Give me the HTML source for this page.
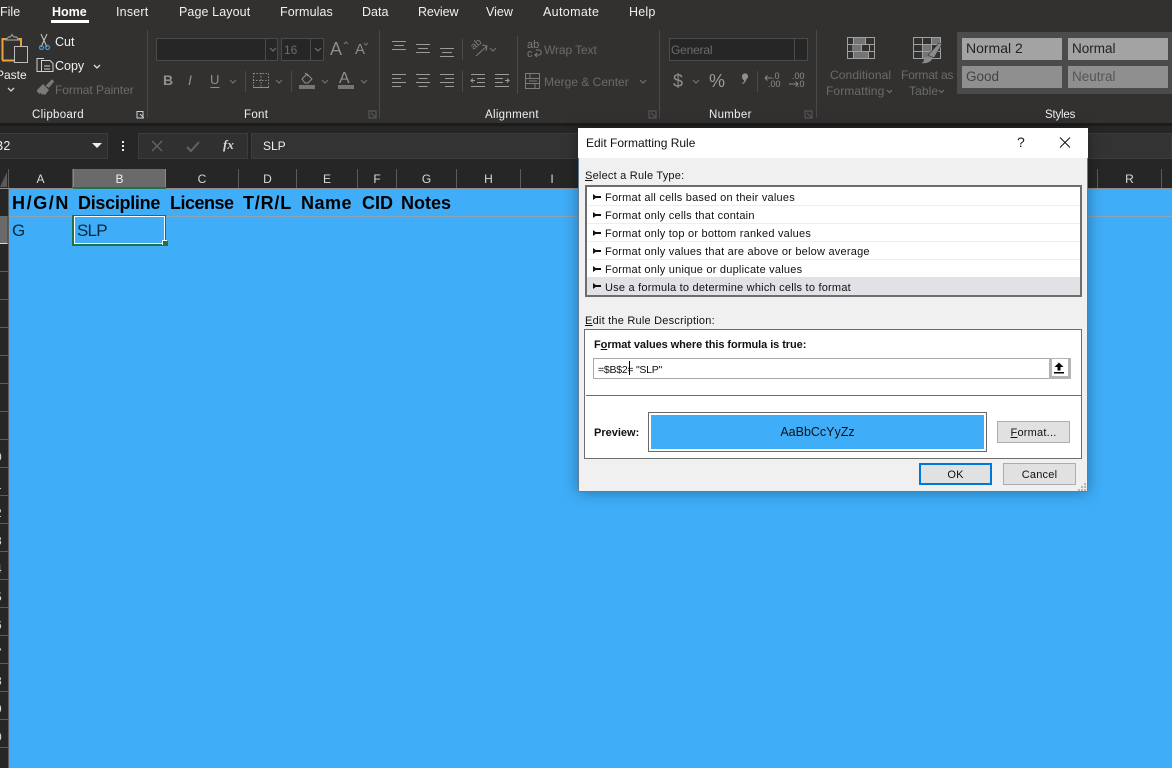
<!DOCTYPE html>
<html lang="en"><head><meta charset="utf-8"><title>Edit Formatting Rule</title>
<style>
*{box-sizing:border-box}
html{margin:0;padding:0;width:1172px;height:768px;overflow:hidden;background:#3fadf8}
body{margin:0;padding:0;width:1172px;height:768px;overflow:hidden;position:relative;background:#3fadf8;font-family:"Liberation Sans",sans-serif}
.a{position:absolute;white-space:nowrap}
.b{position:absolute}
.t{position:absolute;white-space:nowrap;font-size:12.5px;line-height:16px;color:#f0f0f0}
.g{color:#6b6b6b}
.lbl{position:absolute;top:107px;font-size:11.5px;line-height:16px;color:#f0f0f0;white-space:nowrap;letter-spacing:.3px}
.sep{position:absolute;top:30px;height:88px;width:1px;background:#4a4a4a}
.sep2{position:absolute;width:1px;background:#4a4a4a}
.box{position:absolute;background:#262626;border:1px solid #4a4a4a;height:23px}
.col{position:absolute;top:169px;height:19px;text-align:center;font-size:12px;line-height:20px;color:#d8d8d8;border-right:1px solid #5c5c5c}
.rh{position:absolute;left:0;width:8px;height:28px;border-bottom:1px solid #5c5c5c;overflow:hidden}
.rh span{position:absolute;left:-5px;top:10px;font-size:12px;line-height:14px;color:#d8d8d8}
.hd{position:absolute;top:192px;font-weight:bold;font-size:18px;line-height:22px;color:#000;white-space:nowrap}
svg{position:absolute;overflow:visible}
.it{position:absolute;left:605px;white-space:nowrap;font-size:11px;line-height:18px;color:#111;letter-spacing:.22px;width:470px}
.li{position:absolute;left:587px;width:493px;height:18px;border-bottom:1px solid #eee}
.li i{position:absolute;left:6px;top:8px;width:8px;height:2px;background:#111}
.li i:after{content:"";position:absolute;left:0;top:-2px;border-left:4px solid #111;border-top:3px solid transparent;border-bottom:3px solid transparent}
.dt{position:absolute;white-space:nowrap;font-size:11px;line-height:14px;color:#111;letter-spacing:.22px}
.btn{position:absolute;background:#e1e1e1;border:1px solid #adadad;height:22px;text-align:center;font-size:11px;line-height:22px;color:#111;letter-spacing:.22px}
.st{position:absolute;width:100px;height:22px;font-size:13.5px;line-height:21px;padding-left:4px;white-space:nowrap}
</style></head><body>

<!-- ribbon -->
<div class="b" style="left:0;top:0;width:1172px;height:123px;background:#323130"></div>
<div class="b" style="left:0;top:123px;width:1172px;height:46px;background:#262626"></div>
<div class="b" style="left:0;top:123px;width:1172px;height:3px;background:#1c1c1c"></div>

<div class="t" style="left:0;top:4px">File</div>
<div class="t" style="left:52px;top:4px;font-weight:bold;color:#fff">Home</div>
<div class="b" style="left:51px;top:20px;width:38px;height:3px;background:#fff"></div>
<div class="t" style="left:116px;top:4px;letter-spacing:.2px">Insert</div>
<div class="t" style="left:179px;top:4px;letter-spacing:.1px">Page Layout</div>
<div class="t" style="left:280px;top:4px;letter-spacing:.1px">Formulas</div>
<div class="t" style="left:362px;top:4px">Data</div>
<div class="t" style="left:418px;top:4px;letter-spacing:-.1px">Review</div>
<div class="t" style="left:486px;top:4px">View</div>
<div class="t" style="left:543px;top:4px;letter-spacing:.35px">Automate</div>
<div class="t" style="left:629px;top:4px;letter-spacing:.2px">Help</div>

<div class="sep" style="left:147px"></div><div class="sep" style="left:379px"></div>
<div class="sep" style="left:659px"></div><div class="sep" style="left:816px"></div>
<div class="sep2" style="left:245px;top:71px;height:21px"></div>
<div class="sep2" style="left:291px;top:71px;height:21px"></div>
<div class="sep2" style="left:462px;top:39px;height:21px"></div>
<div class="sep2" style="left:462px;top:71px;height:21px"></div>
<div class="sep2" style="left:517px;top:36px;height:58px"></div>
<div class="sep2" style="left:757px;top:71px;height:21px"></div>

<!-- clipboard -->
<svg style="left:0;top:0" width="146" height="120" fill="none">
<path d="M2.500 60V39H7M17 39H21V46M2 60.500H14" stroke="#e8a33d" stroke-width="2"/>
<path d="M6 40L8.500 37H10.500L12 34.500L14 37H16.500L19 40Z" stroke="#9a9a9a" stroke-width="1.200"/>
<rect x="14.500" y="46.500" width="13" height="16" fill="#323130" stroke="#bdbdbd"/>
<path d="M8 88l3 3 3-3" stroke="#d0d0d0" stroke-width="1.300"/>
<path d="M41 34l6 13M47 34l-6 13" stroke="#c8c8c8"/><circle cx="41.500" cy="47.500" r="2" stroke="#3a96dd" stroke-width="1.300"/><circle cx="47.500" cy="47.500" r="2" stroke="#3a96dd" stroke-width="1.300"/>
<path d="M42 71.500H37V58.500H44M45.500 60.500H50L53 63.500V71.500H41.500V60.500H45.500" stroke="#d0d0d0"/><path d="M44 66h6M44 69h6" stroke="#d0d0d0"/>
<path d="M94 65l3 3 3-3" stroke="#e0e0e0" stroke-width="1.300"/>
<path d="M37 90l6-6 6 6-4 5-2-1-1 1-1-2-2 1-1-2-1 0Z" fill="#7a7a7a"/><path d="M46 86l5-5 1-1 1.500 1.500-5 6" fill="#7a7a7a" stroke="#7a7a7a"/>
<path d="M137 111.500h6v6M137 111v7h7M140 114l3.500 3.500" stroke="#cfcfcf"/>
<path d="M369 111h7v7h-7zM371 113l4 4" stroke="#5e5e5e"/>
<path d="M649 111h7v7h-7zM651 113l4 4" stroke="#5e5e5e"/>
<path d="M805 111h7v7h-7zM807 113l4 4" stroke="#5e5e5e"/>
</svg>
<div class="t" style="left:-4px;top:67px;font-size:12px">Paste</div>
<div class="t" style="left:55px;top:34px">Cut</div>
<div class="t" style="left:55px;top:58px">Copy</div>
<div class="t g" style="left:55px;top:82px;font-size:12px;letter-spacing:-.05px">Format Painter</div>
<div class="lbl" style="left:32px">Clipboard</div>
<div class="lbl" style="left:244px">Font</div>
<div class="lbl" style="left:485px">Alignment</div>
<div class="lbl" style="left:709px">Number</div>
<div class="lbl" style="left:1045px;letter-spacing:-.2px">Styles</div>

<!-- font -->
<div class="box" style="left:156px;top:38px;width:122px"></div>
<div class="b" style="left:265px;top:38px;width:1px;height:23px;background:#4a4a4a"></div>
<div class="box" style="left:281px;top:38px;width:43px"></div>
<div class="b" style="left:310px;top:38px;width:1px;height:23px;background:#4a4a4a"></div>
<div class="t g" style="left:284px;top:42px;font-size:12px">16</div>
<div class="a" style="left:330px;top:38px;font-size:18px;line-height:22px;color:#8a8a8a">A</div>
<div class="a" style="left:355px;top:41px;font-size:15px;line-height:18px;color:#8a8a8a">A</div>
<div class="a" style="left:163px;top:72px;font-size:14px;line-height:16px;font-weight:bold;color:#8f8f8f">B</div>
<div class="a" style="left:188px;top:72px;font-size:14px;line-height:16px;font-style:italic;color:#8f8f8f">I</div>
<div class="a" style="left:210px;top:72px;font-size:13px;line-height:16px;color:#8f8f8f">U</div>
<div class="a" style="left:339px;top:71px;font-size:16px;line-height:16px;color:#8f8f8f">A</div>

<svg style="left:0;top:0" width="960" height="120" fill="none">
<g stroke="#6f6f6f" stroke-width="1.200">
<path d="M270 48l3 3 3-3M315 48l3 3 3-3"/>
<path d="M344 44l2-2 2 2M364 43l2 2 2-2"/>
<path d="M230 80l3 3 3-3M276 80l3 3 3-3M322 80l3 3 3-3M361 80l3 3 3-3"/>
<path d="M490 48l3 3 3-3M693 80l3 3 3-3M640 80l3 3 3-3M799 48l3 3 3-3"/>
<path d="M887 90l2.500 2.500 2.500-2.500M939 90l2.500 2.500 2.500-2.500"/>
</g>
<path d="M210.500 87.500h9" stroke="#8f8f8f"/>
<path d="M253.500 73.500h15v14h-15zM261 73v14M253 80.500h15" stroke="#8a8a8a" stroke-dasharray="1.500 1.500"/><path d="M253 87.500h16" stroke="#8f8f8f"/>
<path d="M302 79l5-5 5 5-4 4h-3zM305 73l3 3" stroke="#8f8f8f"/><rect x="299" y="85" width="16" height="4" fill="#757575"/>
<rect x="338" y="85" width="16" height="4" fill="#757575"/>
<!-- alignment -->
<g stroke="#9a9a9a">
<path d="M392 41.500h14M394 45.500h10M392 49.500h14"/>
<path d="M416 44.500h14M418 48.500h10M416 52.500h14"/>
<path d="M440 48.500h14M442 52.500h10M440 56.500h14"/>
<path d="M392 74.500h14M392 78.500h9M392 82.500h14M392 86.500h9"/>
<path d="M416 74.500h14M418.500 78.500h9M416 82.500h14M418.500 86.500h9"/>
<path d="M440 74.500h14M445 78.500h9M440 82.500h14M445 86.500h9"/>
<path d="M471 74.500h14M477 78.500h8M477 82.500h8M471 86.500h14M475 80.500h-4M473 78.500l-2 2 2 2"/>
<path d="M495 74.500h14M495 78.500h8M495 82.500h8M495 86.500h14M505 80.500h4M507 78.500l2 2-2 2"/>
</g>
<g stroke="#7c7c7c">
<path d="M476 56l11-10M482 45l5 1-1 5"/>
<path d="M525.500 73.500h14v15h-14zM525.500 78.500h14M525.500 83.500h14M530 74v4M535 84v4M529 81h8"/>
<path d="M536 50h3c3 0 3 5 0 5h-4M537 53l-2 2 2 2"/>
</g>
<!-- number -->
<path d="M765 78h7M767.500 75.500l-2.500 2.500 2.500 2.500M789 84h9M795.500 81.500l2.500 2.500-2.500 2.500" stroke="#8a8a8a"/>
<path d="M742 76.500a3 3 0 1 1 4.500 2.500c-.3 2.500-2 4-4 5l-.5-.8c1.300-.8 2.200-1.800 2.300-3.200-1.300.2-2.300-1.500-2.300-3.500z" fill="#8f8f8f"/>
<!-- cond formatting -->
<rect x="853" y="38" width="12" height="7" fill="#757575"/><rect x="852" y="45" width="9" height="7" fill="#757575"/><rect x="853" y="52" width="15" height="7" fill="#757575"/>
<g stroke="#a0a0a0" stroke-width="1">
<rect x="847.500" y="37.500" width="27" height="21"/>
<path d="M847 44.500h28M847 51.500h28M853.500 37v7M865.500 37v7M869.500 44v7M861.500 44v7M853.500 52v7M868.500 52v7"/>
</g>
<rect x="922" y="45" width="9" height="14" fill="#757575"/><rect x="931" y="38" width="9" height="7" fill="#757575"/>
<g stroke="#a0a0a0" stroke-width="1">
<rect x="913.500" y="37.500" width="27" height="21"/>
<path d="M913 44.500h28M913 51.500h28M922.500 37v21M931.500 37v21"/>
</g>
<path d="M928 55l11-12 3 1-8 14z" fill="#8a8a8a" stroke="#323130" stroke-width=".6"/>
<path d="M921 63c2 0 3-2 3-4 1-2 3-3 5-2l3 2c-1 3-6 5-11 4z" fill="#8a8a8a"/>
</svg>
<div class="a" style="left:527px;top:41px;font-size:11px;line-height:9px;color:#7c7c7c">ab<br>c</div>
<div class="a" style="left:471px;top:40px;font-size:10px;line-height:10px;color:#7c7c7c;transform:rotate(-40deg)">ab</div>
<div class="t g" style="left:544px;top:42px;font-size:12px;letter-spacing:-.1px">Wrap Text</div>
<div class="t g" style="left:544px;top:74px;font-size:12px">Merge &amp; Center</div>
<div class="box" style="left:669px;top:38px;width:139px"></div>
<div class="b" style="left:794px;top:38px;width:1px;height:23px;background:#4a4a4a"></div>
<div class="t g" style="left:671px;top:42px;font-size:12px;letter-spacing:-.2px">General</div>
<div class="a" style="left:673px;top:71px;font-size:18px;line-height:20px;color:#8f8f8f">$</div>
<div class="a" style="left:709px;top:71px;font-size:18px;line-height:20px;color:#9a9a9a">%</div>
<div class="a" style="left:772px;top:72px;font-size:9px;line-height:8px;color:#8f8f8f">.0</div>
<div class="a" style="left:768px;top:80px;font-size:9px;line-height:8px;color:#8f8f8f">.00</div>
<div class="a" style="left:792px;top:72px;font-size:9px;line-height:8px;color:#8f8f8f">.00</div>
<div class="a" style="left:797px;top:80px;font-size:9px;line-height:8px;color:#8f8f8f">.0</div>
<div class="t g" style="left:830px;top:67px;font-size:12px;letter-spacing:.1px">Conditional</div>
<div class="t g" style="left:826px;top:83px;font-size:12px;letter-spacing:.1px">Formatting</div>
<div class="t g" style="left:901px;top:67px;font-size:12px;letter-spacing:-.2px">Format as</div>
<div class="t g" style="left:909px;top:83px;font-size:12px;letter-spacing:.1px">Table</div>

<!-- styles -->
<div class="b" style="left:957px;top:32px;width:215px;height:62px;background:#4b4b4b"></div>
<div class="st" style="left:962px;top:38px;background:#a3a3a3;color:#222;font-size:14px">Normal 2</div>
<div class="st" style="left:1068px;top:38px;background:#a3a3a3;color:#222">Normal</div>
<div class="st" style="left:962px;top:66px;background:#8f8f8f;color:#444">Good</div>
<div class="st" style="left:1068px;top:66px;background:#8f8f8f;color:#555">Neutral</div>

<!-- formula bar -->
<div class="b" style="left:-1px;top:133px;width:109px;height:26px;background:#2f2f2f;border:1px solid #3c3c3c"></div>
<div class="t" style="left:-5px;top:138px;font-size:12.5px">B2</div>
<div class="b" style="left:92px;top:143px;border-top:5px solid #eee;border-left:5px solid transparent;border-right:5px solid transparent"></div>
<div class="b" style="left:122px;top:141px;width:2px;height:2px;background:#eee;box-shadow:0 4px 0 #eee,0 8px 0 #eee"></div>
<div class="b" style="left:138px;top:133px;width:110px;height:26px;background:#303030;border:1px solid #3c3c3c"></div>
<svg style="left:0;top:0" width="300" height="170" fill="none">
<path d="M152 141l10 10M162 141l-10 10" stroke="#626262" stroke-width="1.500"/>
<path d="M187 147l4 4 8-9" stroke="#626262" stroke-width="2"/>
</svg>
<div class="a" style="left:223px;top:137px;font-size:13px;line-height:16px;font-style:italic;font-weight:bold;font-family:'Liberation Serif',serif;color:#d8d8d8">fx</div>
<div class="b" style="left:251px;top:133px;width:921px;height:26px;background:#333;border:1px solid #3c3c3c"></div>
<div class="t" style="left:263px;top:138px;font-size:12px">SLP</div>

<!-- column headers -->
<div class="b" style="left:0;top:169px;width:1172px;height:19px;background:#262626"></div>
<div class="b" style="left:0;top:172px;border-bottom:15px solid #5a5a5a;border-left:7px solid transparent"></div>
<div class="b" style="left:8px;top:169px;width:1px;height:19px;background:#5c5c5c"></div>
<div class="col" style="left:9px;width:64px">A</div>
<div class="col" style="left:73px;width:93px;background:#6a6a6a;color:#f0f0f0;border-right:1px solid #8a8a8a;border-left:1px solid #8a8a8a">B</div>
<div class="col" style="left:166px;width:73px">C</div>
<div class="col" style="left:239px;width:58px">D</div>
<div class="col" style="left:297px;width:61px">E</div>
<div class="col" style="left:358px;width:39px">F</div>
<div class="col" style="left:397px;width:60px">G</div>
<div class="col" style="left:457px;width:64px">H</div>
<div class="col" style="left:521px;width:63px">I</div>
<div class="col" style="left:1097px;width:65px;border-left:1px solid #5c5c5c">R</div>
<div class="b" style="left:1161px;top:169px;width:11px;height:19px;border-left:1px solid #5c5c5c"></div>
<div class="b" style="left:0;top:188px;width:1172px;height:1px;background:#8c8c8c"></div>
<div class="b" style="left:73px;top:187px;width:93px;height:2px;background:#217346"></div>

<!-- row headers -->
<div class="b" style="left:0;top:189px;width:9px;height:579px;background:#262626;border-right:1px solid #5c5c5c"></div>
<div class="b" style="left:0;top:216px;width:8px;height:28px;background:#6a6a6a;border-right:1px solid #217346;border-bottom:1px solid #d8d8d8"></div>
<div class="rh" style="top:244px"></div><div class="rh" style="top:272px"></div><div class="rh" style="top:300px"></div>
<div class="rh" style="top:328px"></div><div class="rh" style="top:356px"></div><div class="rh" style="top:384px"></div><div class="rh" style="top:412px"></div>
<div class="rh" style="top:440px"><span>0</span></div><div class="rh" style="top:468px"><span>1</span></div>
<div class="rh" style="top:496px"><span>2</span></div><div class="rh" style="top:524px"><span>3</span></div>
<div class="rh" style="top:552px"><span>4</span></div><div class="rh" style="top:580px"><span>5</span></div>
<div class="rh" style="top:608px"><span>6</span></div><div class="rh" style="top:636px"><span>7</span></div>
<div class="rh" style="top:664px"><span>8</span></div><div class="rh" style="top:692px"><span>9</span></div>
<div class="rh" style="top:720px"><span>0</span></div><div class="rh" style="top:748px;height:20px;border:0"><span>1</span></div>

<!-- sheet -->
<div class="b" style="left:9px;top:216px;width:1163px;height:1px;background:#8fa3b3"></div>
<div class="hd" style="left:12px;letter-spacing:1.6px">H/G/N</div>
<div class="hd" style="left:78px;letter-spacing:-.3px">Discipline</div>
<div class="hd" style="left:170px;letter-spacing:-.5px">License</div>
<div class="hd" style="left:243px;letter-spacing:.8px">T/R/L</div>
<div class="hd" style="left:301px;letter-spacing:.5px">Name</div>
<div class="hd" style="left:362px">CID</div>
<div class="hd" style="left:401px">Notes</div>
<div class="a" style="left:12px;top:220px;font-size:17px;line-height:22px;color:#0a2a40;letter-spacing:-.8px">G</div>
<div class="a" style="left:77px;top:220px;font-size:17px;line-height:22px;color:#0a2a40;letter-spacing:-.8px">SLP</div>
<div class="b" style="left:72px;top:215px;width:94px;height:31px;border:solid #217346;border-width:1px 1px 2px 2px;box-shadow:inset 0 0 0 1px #fff"></div>
<div class="b" style="left:163px;top:241px;width:5px;height:5px;background:#217346;box-shadow:-1px -1px 0 #fff"></div>

<!-- dialog -->
<div class="b" style="left:578px;top:128px;width:510px;height:364px;background:#f0f0f0;border:1px solid #5f7f99;border-top:0;box-shadow:0 0 14px rgba(0,0,0,.35)"></div>
<div class="b" style="left:578px;top:128px;width:510px;height:30px;background:#fff"></div>
<div class="a" style="left:586px;top:135px;font-size:12px;line-height:16px;color:#111">Edit Formatting Rule</div>
<div class="a" style="left:1017px;top:134px;font-size:14px;line-height:16px;color:#222">?</div>
<svg style="left:0;top:0" width="1172" height="500" fill="none">
<path d="M1060 137.500l10 10M1070 137.500l-10 10" stroke="#111"/>
</svg>
<div class="dt" style="left:585px;top:169px"><u>S</u>elect a Rule Type:</div>

<div class="b" style="left:585px;top:185px;width:497px;height:112px;background:#fff;border:2px solid #6d6d6d"></div>
<div class="li" style="top:188px"><i></i></div><div class="it" style="top:189px">Format all cells based on their values</div>
<div class="li" style="top:206px"><i></i></div><div class="it" style="top:207px">Format only cells that contain</div>
<div class="li" style="top:224px"><i></i></div><div class="it" style="top:225px">Format only top or bottom ranked values</div>
<div class="li" style="top:242px"><i></i></div><div class="it" style="top:243px">Format only values that are above or below average</div>
<div class="li" style="top:260px"><i></i></div><div class="it" style="top:261px">Format only unique or duplicate values</div>
<div class="li" style="top:277px;height:18px;background:#e1e1e6;border:0"><i></i></div><div class="it" style="top:279px">Use a formula to determine which cells to format</div>

<div class="dt" style="left:585px;top:314px"><u>E</u>dit the Rule Description:</div>
<div class="b" style="left:584px;top:329px;width:498px;height:130px;background:#fff;border:1px solid #6d6d6d"></div>
<div class="dt" style="left:594px;top:338px;font-weight:bold;letter-spacing:-.07px">F<u>o</u>rmat values where this formula is true:</div>
<div class="b" style="left:593px;top:358px;width:478px;height:21px;background:#fff;border:1px solid #a9a9b0"></div>
<div class="dt" style="left:598px;top:363px;font-size:10.500px;letter-spacing:-.25px">=$B$2= "SLP"</div>
<div class="b" style="left:629px;top:361px;width:1px;height:14px;background:#000"></div>
<div class="b" style="left:1049px;top:358px;width:22px;height:21px;background:#fff;border:3px solid #b4b4b4;border-width:1px 3px 3px 3px"></div>
<svg style="left:0;top:0" width="1172" height="500">
<path d="M1059 362.500l-4.500 4.500h3v3.500h3V367h3z" fill="#000"/><rect x="1054" y="372" width="10" height="1.500" fill="#000"/>
<g fill="#b5b5b5"><rect x="1084" y="483" width="2" height="2"/><rect x="1081" y="486" width="2" height="2"/><rect x="1084" y="486" width="2" height="2"/><rect x="1078" y="489" width="2" height="2"/><rect x="1081" y="489" width="2" height="2"/><rect x="1084" y="489" width="2" height="2"/></g>
</svg>
<div class="b" style="left:586px;top:395px;width:495px;height:1px;background:#6d6d6d"></div>
<div class="dt" style="left:594px;top:426px;font-weight:bold;letter-spacing:0">Preview:</div>
<div class="b" style="left:648px;top:412px;width:339px;height:40px;background:#fff;border:1px solid #696969"></div>
<div class="b" style="left:651px;top:415px;width:333px;height:34px;background:#3fadf8;text-align:center;font-size:12.500px;line-height:35px;color:#111">AaBbCcYyZz</div>
<div class="btn" style="left:997px;top:421px;width:73px"><u>F</u>ormat...</div>
<div class="btn" style="left:919px;top:463px;width:73px;border:2px solid #0078d7;line-height:20px">OK</div>
<div class="btn" style="left:1003px;top:463px;width:73px">Cancel</div>
</body></html>
